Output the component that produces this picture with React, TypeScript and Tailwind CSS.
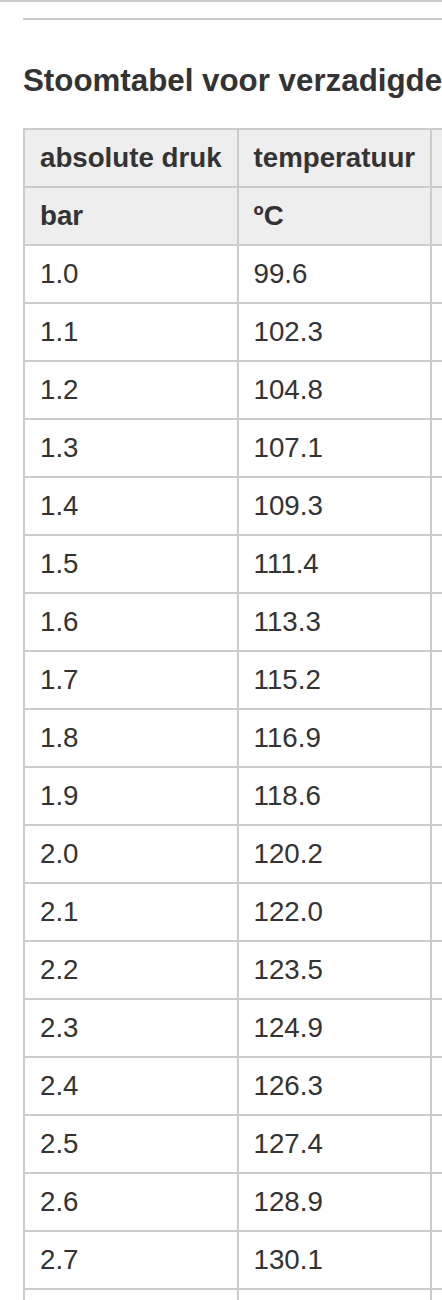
const rows: [string, string, string][] = [
  ["1.0", "99.6", "0.590"],
  ["1.1", "102.3", "0.646"],
  ["1.2", "104.8", "0.700"],
  ["1.3", "107.1", "0.755"],
  ["1.4", "109.3", "0.809"],
  ["1.5", "111.4", "0.863"],
  ["1.6", "113.3", "0.916"],
  ["1.7", "115.2", "0.970"],
  ["1.8", "116.9", "1.023"],
  ["1.9", "118.6", "1.076"],
  ["2.0", "120.2", "1.129"],
  ["2.1", "122.0", "1.181"],
  ["2.2", "123.5", "1.234"],
  ["2.3", "124.9", "1.286"],
  ["2.4", "126.3", "1.338"],
  ["2.5", "127.4", "1.390"],
  ["2.6", "128.9", "1.442"],
  ["2.7", "130.1", "1.494"],
  ["2.8", "131.2", "1.546"],
];

const cell = "border-2 border-[#ccc] px-[15px] py-[11px] leading-[34px] whitespace-nowrap text-left";

export default function App() {
  return (
    <div className="w-[442px] overflow-hidden bg-white text-[#333] font-['Liberation_Sans',Arial,sans-serif]">
      <div className="h-[2px] bg-[#ccc]" />
      <div className="pl-[23px] pt-[16px]">
        <div className="h-[2px] bg-[#ccc]" />
        <h2 className="mt-[43px] text-[31.3px] leading-[36px] font-bold whitespace-nowrap">
          Stoomtabel voor verzadigde stoom
        </h2>
        <table className="mt-[29px] border-collapse text-[27.7px]">
          <thead className="bg-[#eee] font-bold">
            <tr>
              <th className={cell}>absolute druk</th>
              <th className={cell}>temperatuur</th>
              <th className={cell}>soortelijk volume</th>
            </tr>
            <tr>
              <th className={cell}>bar</th>
              <th className={cell}>ºC</th>
              <th className={cell}>m³/kg</th>
            </tr>
          </thead>
          <tbody>
            {rows.map(([p, t, v]) => (
              <tr key={p}>
                <td className={cell}>{p}</td>
                <td className={cell}>{t}</td>
                <td className={cell}>{v}</td>
              </tr>
            ))}
          </tbody>
        </table>
      </div>
    </div>
  );
}
